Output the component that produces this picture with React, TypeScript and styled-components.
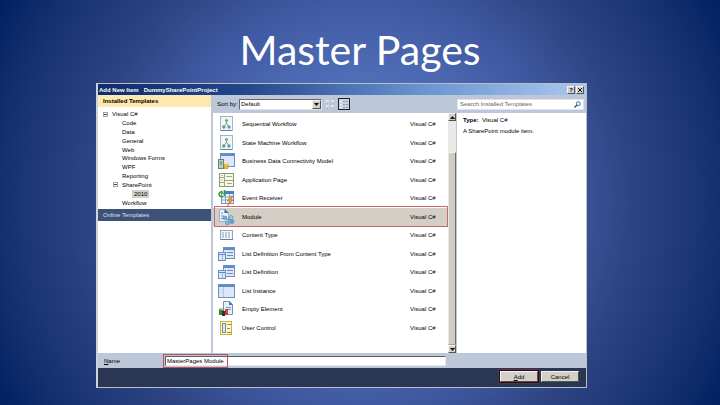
import React, { useState } from 'react';
import styled, { createGlobalStyle, css } from 'styled-components';

const Global = createGlobalStyle`
  * { box-sizing: border-box; }
  body { margin: 0; background: #002060; }
  button, input, select { font: inherit; color: inherit; margin: 0; padding: 0; border-radius: 0; }
  ul { list-style: none; margin: 0; padding: 0; }
`;

const Slide = styled.main`
  min-height: 100vh;
  display: flex;
  flex-direction: column;
  padding-bottom: 17px;
  background: radial-gradient(circle farthest-corner at 50% 50%, #5a7bc8 0%, #5070b9 28%, #4059a2 49%, #2f4583 65%, #16306f 87%, #002060 100%);
`;

const Title = styled.h1`
  margin: 0;
  padding-top: 24px;
  height: 83px;
  text-align: center;
  font: 400 41px/52px Lato, sans-serif;
  color: #fff;
`;

const Dialog = styled.section`
  flex: 1;
  display: flex;
  flex-direction: column;
  margin: 0 133px 0 96px;
  border: 1px solid #b9bfc4;
  border-left: 2px solid #cdd3da;
  background: #fff;
  font: 6px/8px 'Liberation Sans', Arial, sans-serif;
  color: #000;
`;

const TitleBar = styled.header`
  display: flex;
  align-items: center;
  gap: 1px;
  height: 11px;
  padding: 0 2px 0 1px;
  background: linear-gradient(90deg, #0f2c6c, #23468a 30%, #6d97d2 68%, #a9c8ec);
  color: #fff;
  font-weight: 700;
`;

const Caption = styled.h2`
  flex: 1;
  margin: 0;
  font: inherit;
  white-space: pre;
`;

const bevel = css`
  border: 1px solid;
  border-color: #f6f4ee #55534e #55534e #f6f4ee;
  background: #d4d0c8;
`;

const CaptionButton = styled.button`
  ${bevel}
  width: 8px;
  height: 8px;
  display: grid;
  place-items: center;
  color: #111;
  line-height: 6px;
`;

const Body = styled.div`
  flex: 1;
  display: flex;
  gap: 2px;
  background: #bcc7da;
`;

const Sidebar = styled.nav`
  width: 113px;
  background: #fff;
`;

const InstalledHeading = styled.h3`
  margin: 0;
  height: 12px;
  padding-left: 5px;
  background: #fde9ae;
  font: inherit;
  font-weight: 700;
  line-height: 12px;
`;

const Tree = styled.ul`
  display: grid;
  grid-auto-rows: 1fr;
  height: 97px;
  margin: 3px 0 2px;
`;

const TreeItem = styled.li<{ $level: number }>`
  display: flex;
  align-items: center;
  gap: 4px;
  padding-left: ${(p) => p.$level * 10 + 5}px;
`;

const TreeLabel = styled.span<{ $selected?: boolean }>`
  padding: 0 ${(p) => (p.$selected ? 2 : 0)}px;
  background: ${(p) => (p.$selected ? '#d4d0c8' : 'transparent')};
`;

const TreeSpacer = styled.span`
  width: 5px;
`;

const OnlineHeading = styled.button`
  display: block;
  width: 100%;
  height: 12px;
  padding-left: 5px;
  border: 0;
  background: #3d5277;
  color: #dbe2ee;
  text-align: left;
  line-height: 12px;
`;

const Main = styled.div`
  flex: 1;
  min-width: 0;
  display: flex;
  flex-direction: column;
`;

const Toolbar = styled.div`
  display: flex;
  align-items: center;
  height: 18px;
  padding: 0 2px 0 4px;
`;

const SortLabel = styled.label`
  width: 22px;
  white-space: nowrap;
`;

const SelectFrame = styled.div`
  position: relative;
  width: 83px;
  height: 11px;
  border: 1px solid;
  border-color: #63676d #e4e6ea #e4e6ea #63676d;
  background: #fff;
`;

const Select = styled.select`
  appearance: none;
  display: block;
  width: 100%;
  height: 9px;
  padding-left: 1px;
  border: 0;
  background: transparent;
  line-height: 9px;
`;

const SelectArrow = styled.span`
  ${bevel}
  position: absolute;
  top: 0;
  right: 0;
  width: 9px;
  height: 9px;
  display: grid;
  place-items: center;
  pointer-events: none;
`;

const ViewButton = styled.button<{ $on?: boolean }>`
  display: grid;
  place-items: center;
  width: 12px;
  height: 12px;
  margin-left: 2px;
  border: 1px solid ${(p) => (p.$on ? '#1b2436' : 'transparent')};
  background: ${(p) => (p.$on ? '#c9d3e2' : 'transparent')};
`;

const SearchBox = styled.div`
  display: flex;
  align-items: center;
  width: 127px;
  height: 11px;
  margin-left: auto;
  padding: 0 2px;
  background: #fff;
  border: 1px solid #dfe4ec;
`;

const SearchInput = styled.input`
  flex: 1;
  min-width: 0;
  height: 9px;
  border: 0;
  outline: 0;
  background: transparent;
  &::placeholder { color: #666; opacity: 1; }
`;

const Content = styled.div`
  flex: 1;
  display: flex;
`;

const Templates = styled.ul`
  flex: 1;
  display: grid;
  grid-auto-rows: 1fr;
  padding: 2px 0 16px;
  background: #fff;
`;

const TemplateCell = styled.li`
  position: relative;
  display: grid;
`;

const TemplateRow = styled.button<{ $selected: boolean }>`
  display: grid;
  grid-template-columns: 24px 1fr 38px;
  align-items: center;
  padding-left: 5px;
  border: 0;
  background: ${(p) => (p.$selected ? '#d4cec6' : 'transparent')};
  text-align: left;
  white-space: nowrap;
`;

const RowOutline = styled.span`
  position: absolute;
  inset: -2px 0 -1px 1px;
  border: 1px solid #c9696c;
  pointer-events: none;
`;

const Scrollbar = styled.div`
  display: flex;
  flex-direction: column;
  width: 8px;
  background: #ebe9e6;
`;

const ScrollButton = styled.button`
  ${bevel}
  height: 8px;
  display: grid;
  place-items: center;
`;

const ScrollGap = styled.div`
  flex: 31;
`;

const ScrollThumb = styled.div`
  flex: 193;
  border: 1px solid;
  border-color: #f4f2ee #706e69 #a5a29b #e9e6e0;
  background: #d0ccc4;
`;

const Details = styled.aside`
  width: 129px;
  margin-left: 1px;
  padding: 3px 6px;
  background: #fff;
  p { margin: 0 0 3px; }
`;

const NameRow = styled.div`
  display: flex;
  align-items: center;
  height: 15px;
  padding-left: 6px;
  background: #bcc7d9;
`;

const NameLabel = styled.label`
  width: 61px;
`;

const NameField = styled.div`
  position: relative;
  flex: 1;
  margin-right: 140px;
`;

const NameInput = styled.input`
  display: block;
  width: 100%;
  height: 10px;
  padding-left: 1px;
  border: 1px solid;
  border-color: #5c6066 #e8eaee #e8eaee #5c6066;
  background: #fff;
`;

const NameOutline = styled.span`
  position: absolute;
  top: -2px;
  left: -2px;
  width: 65px;
  height: 14px;
  border: 1px solid #b9505c;
  pointer-events: none;
`;

const Footer = styled.footer`
  display: flex;
  justify-content: flex-end;
  align-items: center;
  gap: 3px;
  height: 19px;
  padding: 0 7px 2px 0;
  background: #293753;
`;

const ActionButton = styled.button<{ $primary?: boolean }>`
  ${bevel}
  width: 38px;
  height: 11px;
  line-height: 8px;
  outline: ${(p) => (p.$primary ? '1px solid #12141c' : 'none')};
  box-shadow: ${(p) => (p.$primary ? '0 0 0 2px #632c45' : 'none')};
`;

const Arrow = ({ up }: { up?: boolean }) => (
  <svg width="5" height="3" viewBox="0 0 5 3" aria-hidden="true">
    <path d={up ? 'M0 3L2.500 0L5 3z' : 'M0 0L2.500 3L5 0z'} fill="#111" />
  </svg>
);

const Minus = () => (
  <svg width="5" height="5" viewBox="0 0 5 5" aria-hidden="true">
    <rect x=".5" y=".5" width="4" height="4" fill="#fff" stroke="#a4a4a4" />
    <path d="M1 2.500h3" stroke="#444" />
  </svg>
);

const WindowShape = ({ x, y, w, h }: { x: number; y: number; w: number; h: number }) => (
  <g>
    <rect x={x + 0.5} y={y + 0.5} width={w - 1} height={h - 1} fill="#dce8f8" stroke="#7590b5" />
    <rect x={x + 1} y={y + 1} width={w - 2} height="2" fill="#5d8cd4" />
  </g>
);

const FlowArt = () => (
  <g>
    <rect x="2.500" y=".5" width="12" height="14" fill="#f1f6fb" stroke="#a3b5c8" />
    <path d="M8.500 5v3M6 11l2.500-4L11 11" stroke="#8fa3a8" fill="none" />
    <circle cx="8.500" cy="4.500" r="1.600" fill="#74b07a" />
    <circle cx="5.800" cy="11" r="1.700" fill="#5fa568" />
    <circle cx="11" cy="11" r="1.700" fill="#6c97b8" />
    <path d="M3 14.500h11" stroke="#5c81ad" />
  </g>
);

const art: Record<string, React.ReactNode> = {
  flow: <FlowArt />,
  data: (
    <g>
      <WindowShape x={2} y={0} w={15} h={14} />
      <rect x=".5" y="6.500" width="5" height="9" fill="#b9cfc0" stroke="#648476" />
      <path d="M2 9h2M2 11h2" stroke="#4f7d61" />
      <path d="M6 10.500h4v5H6z" fill="#e9b93b" stroke="#b5832a" strokeWidth=".6" />
      <ellipse cx="8" cy="10.500" rx="2" ry="1" fill="#fbe391" />
    </g>
  ),
  page: (
    <g>
      <rect x="1.500" y="1.500" width="14" height="13" fill="#f7f8e9" stroke="#8c9a76" />
      <path d="M6.500 2v12M2 5.500h4M7 8.500h8M2 10.500h4" stroke="#9ba97e" />
      <path d="M8 4.500h6M9 11.500h5" stroke="#8fb094" />
      <path d="M3 3.500h2M3 8h2" stroke="#d2c66a" />
    </g>
  ),
  event: (
    <g>
      <rect x="3.500" y="3.500" width="12" height="10" fill="#eef4fb" stroke="#7892b2" />
      <rect x="7" y="1" width="9" height="3" fill="#4a7cc9" />
      <path d="M4 7h11M4 10h11M7.500 4v9M11.500 4v9" stroke="#86a5c9" />
      <path d="M5 2.500a2.300 2.300 0 1 0 0 3.500M6.500 0v6" stroke="#2ca13a" strokeWidth="1.600" fill="none" />
      <path d="M13 6l-4 5h2.500l-2 5l5.500-6h-2.500l2.500-4z" fill="#f39a32" stroke="#b9602a" strokeWidth=".5" />
    </g>
  ),
  module: (
    <g>
      <path d="M1.500.5h6l3 3v9h-9z" fill="#e9f2fb" stroke="#9cb4cd" />
      <path d="M6.500 0v4h4z" fill="#45658d" />
      <path d="M3 4h2M3 7h3M3 9.500h3" stroke="#6e94bd" />
      <path d="M7 9.500l7 2M9 14l3-5" stroke="#5a98c9" />
      <circle cx="7" cy="9" r="2" fill="#70b2df" stroke="#4a83b4" strokeWidth=".6" />
      <circle cx="13" cy="8.500" r="2" fill="#9acbea" stroke="#4a83b4" strokeWidth=".6" />
      <circle cx="9.500" cy="14" r="2" fill="#7fbce4" stroke="#4a83b4" strokeWidth=".6" />
      <circle cx="14" cy="12.500" r="2" fill="#5ea6d8" stroke="#4a83b4" strokeWidth=".6" />
    </g>
  ),
  content: (
    <g>
      <rect x="2.500" y="3.500" width="12" height="9" fill="#f4f7fb" stroke="#93a3b8" />
      <path d="M4 6h9M4 8h9M4 10h9" stroke="#8a9db7" strokeDasharray="2 1" />
      <path d="M3 12.500h12" stroke="#677d9b" />
    </g>
  ),
  definition: (
    <g>
      <WindowShape x={5} y={1} w={12} h={12} />
      <path d="M9 6.500h6M9 9.500h6" stroke="#6f8eb6" />
      <rect x=".5" y="6.500" width="7" height="8" fill="#d8e7fa" stroke="#6e8db8" />
      <path d="M1 8.500h6" stroke="#5d8cd4" />
      <path d="M4.500 9v5" stroke="#9bb8da" />
    </g>
  ),
  instance: (
    <g>
      <WindowShape x={0} y={1} w={17} h={14} />
      <path d="M5.500 4v10" stroke="#b2c8e5" />
      <path d="M1 6.500h4M1 9.500h4" stroke="#c5d6ec" />
    </g>
  ),
  empty: (
    <g>
      <path d="M5.500.5h6l3 3v10h-9z" fill="#e5effa" stroke="#7592b3" />
      <path d="M11 0v4h4z" fill="#4b78ae" />
      <path d="M8 6.500h5M10 8.500h3" stroke="#6b99cc" />
      <rect x="1" y="8" width="4" height="6" fill="#2e8a3b" />
      <rect x="4" y="10" width="3" height="5" fill="#27324c" />
      <rect x="7" y="8" width="3" height="6" fill="#d23a32" />
      <rect x="2" y="7" width="3" height="2" fill="#e7bd3c" />
    </g>
  ),
  control: (
    <g>
      <rect x="2.500" y="1.500" width="11" height="13" fill="#fdf8d2" stroke="#cbb03d" />
      <rect x="4.500" y="3.500" width="3" height="9" fill="#dfe9ee" stroke="#6f90a3" />
      <path d="M9 4.500h4M9 8.500h3M9 12.500h4" stroke="#a58c2d" />
    </g>
  ),
};

const templates = [
  ['Sequential Workflow', 'flow'],
  ['State Machine Workflow', 'flow'],
  ['Business Data Connectivity Model', 'data'],
  ['Application Page', 'page'],
  ['Event Receiver', 'event'],
  ['Module', 'module'],
  ['Content Type', 'content'],
  ['List Definition From Content Type', 'definition'],
  ['List Definition', 'definition'],
  ['List Instance', 'instance'],
  ['Empty Element', 'empty'],
  ['User Control', 'control'],
];

const tree: { label: string; level: number; open?: boolean }[] = [
  { label: 'Visual C#', level: 0, open: true },
  { label: 'Code', level: 1 },
  { label: 'Data', level: 1 },
  { label: 'General', level: 1 },
  { label: 'Web', level: 1 },
  { label: 'Windows Forms', level: 1 },
  { label: 'WPF', level: 1 },
  { label: 'Reporting', level: 1 },
  { label: 'SharePoint', level: 1, open: true },
  { label: '2010', level: 2 },
  { label: 'Workflow', level: 1 },
];

export default function App() {
  const [selected, setSelected] = useState('Module');
  const [name, setName] = useState('MasterPages Module');

  return (
    <Slide>
      <Global />
      <Title>Master Pages</Title>
      <Dialog aria-label="Add New Item">
        <TitleBar>
          <Caption>{'Add New Item   DummySharePointProject'}</Caption>
          <CaptionButton aria-label="Help">?</CaptionButton>
          <CaptionButton aria-label="Close">
            <svg width="4" height="4" viewBox="0 0 4 4"><path d="M0 0l4 4M4 0L0 4" stroke="#111" /></svg>
          </CaptionButton>
        </TitleBar>
        <Body>
          <Sidebar>
            <InstalledHeading>Installed Templates</InstalledHeading>
            <Tree role="tree">
              {tree.map((node) => (
                <TreeItem key={node.label} $level={node.level} role="treeitem">
                  {node.open ? <Minus /> : <TreeSpacer />}
                  <TreeLabel $selected={node.label === '2010'}>{node.label}</TreeLabel>
                </TreeItem>
              ))}
            </Tree>
            <OnlineHeading>Online Templates</OnlineHeading>
          </Sidebar>
          <Main>
            <Toolbar>
              <SortLabel htmlFor="sort">Sort by:</SortLabel>
              <SelectFrame>
                <Select id="sort" defaultValue="Default"><option>Default</option></Select>
                <SelectArrow><Arrow /></SelectArrow>
              </SelectFrame>
              <ViewButton aria-label="Medium icons">
                <svg width="10" height="10" viewBox="0 0 10 10">
                  <path d="M1 1h3v3H1zM6 1h3v3H6zM1 6h3v3H1zM6 6h3v3H6z" fill="#e6eaf0" />
                  <path d="M3 2v2H1M8 2v2H6M3 7v2H1M8 7v2H6" stroke="#9ba8ba" strokeWidth=".6" fill="none" />
                </svg>
              </ViewButton>
              <ViewButton $on aria-label="Small icons">
                <svg width="10" height="10" viewBox="0 0 10 10">
                  <path d="M1 2.500h2M1 5.500h2M1 8.500h2" stroke="#f0f3f7" />
                  <path d="M4 2.500h2M7 2.500h2M4 5.500h2M7 5.500h2M4 8.500h2M7 8.500h2" stroke="#8a97ab" />
                </svg>
              </ViewButton>
              <SearchBox>
                <SearchInput aria-label="Search Installed Templates" placeholder="Search Installed Templates" />
                <svg width="7" height="7" viewBox="0 0 7 7" aria-hidden="true">
                  <circle cx="4.300" cy="2.700" r="2" fill="#e6f4fb" stroke="#2e78a8" />
                  <path d="M2.800 4.200L.5 6.500" stroke="#25527d" strokeWidth="1.300" />
                </svg>
              </SearchBox>
            </Toolbar>
            <Content>
              <Templates>
                {templates.map(([label, icon]) => (
                  <TemplateCell key={label}>
                    <TemplateRow $selected={label === selected} onClick={() => setSelected(label)}>
                      <svg width="17" height="16" viewBox="0 0 17 16" aria-hidden="true">{art[icon]}</svg>
                      <span>{label}</span>
                      <span>Visual C#</span>
                    </TemplateRow>
                    {label === selected && <RowOutline />}
                  </TemplateCell>
                ))}
              </Templates>
              <Scrollbar>
                <ScrollButton aria-label="Scroll up"><Arrow up /></ScrollButton>
                <ScrollGap />
                <ScrollThumb />
                <ScrollButton aria-label="Scroll down"><Arrow /></ScrollButton>
              </Scrollbar>
              <Details>
                <p><strong>Type:</strong>&nbsp; Visual C#</p>
                <p>A SharePoint module item.</p>
              </Details>
            </Content>
          </Main>
        </Body>
        <NameRow>
          <NameLabel htmlFor="name"><u>N</u>ame</NameLabel>
          <NameField>
            <NameInput id="name" value={name} onChange={(e) => setName(e.target.value)} />
            <NameOutline />
          </NameField>
        </NameRow>
        <Footer>
          <ActionButton $primary><u>A</u>dd</ActionButton>
          <ActionButton>Cancel</ActionButton>
        </Footer>
      </Dialog>
    </Slide>
  );
}
